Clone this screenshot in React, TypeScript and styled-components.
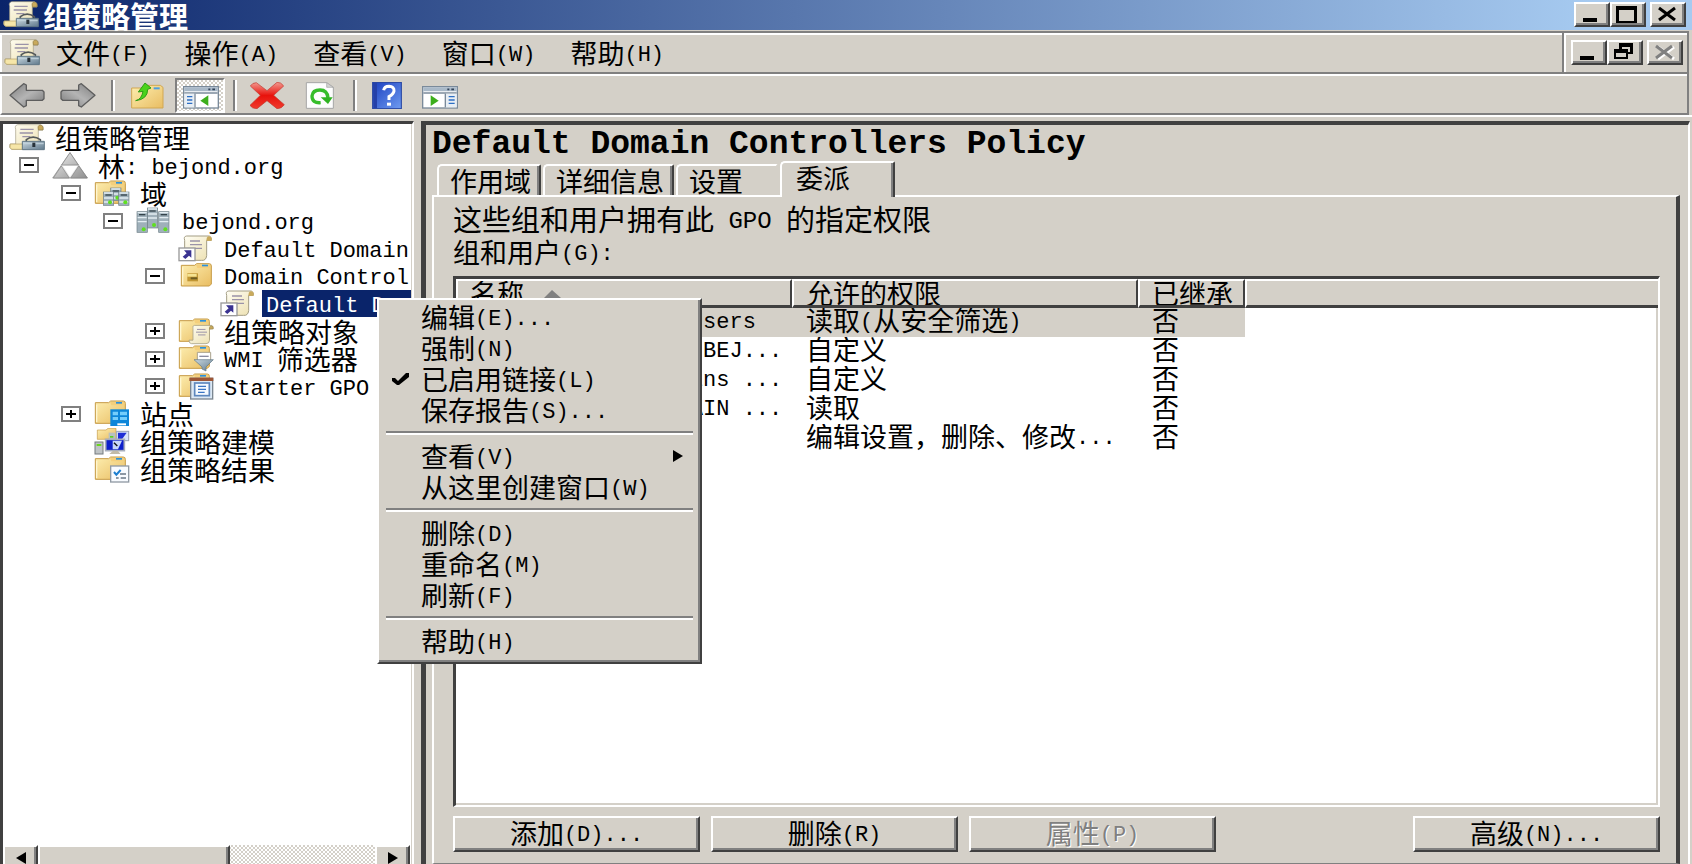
import React from "react";
import styled, { createGlobalStyle, css } from "styled-components";

const face = "#d4d0c8";
const shade = "#808080";
const dark = "#404040";
const navy = "#0a246a";

const GlobalStyle = createGlobalStyle`
  * { box-sizing: border-box; }
  body {
    margin: 0;
    background: ${face};
    color: #000;
    font-family: "Noto Sans CJK SC", sans-serif;
    font-size: 27px;
  }
  button {
    margin: 0;
    padding: 0;
    border: 0;
    background: none;
    color: inherit;
    font: inherit;
  }
`;

/* ---------- text ---------- */

const Latin = styled.span<{ $large?: boolean }>`
  font-family: "Liberation Mono", monospace;
  font-size: ${(p) => (p.$large ? 24 : 22)}px;
  line-height: 1px;
  vertical-align: 3px;
`;

/* Half-width characters are set in the monospace face, the rest in the CJK face. */
function Mixed({ text, large }: { text: string; large?: boolean }) {
  return (
    <>
      {text.split(/([\x20-\x7e]+)/).filter(Boolean).map((run, i) =>
        /^[\x20-\x7e]/.test(run) ? <Latin key={i} $large={large}>{run}</Latin> : run
      )}
    </>
  );
}

/* ---------- bevels ---------- */

const raised = css`
  background: ${face};
  border: 2px solid;
  border-color: #fff ${dark} ${dark} #fff;
  box-shadow: inset -2px -2px 0 ${shade};
`;

/* ---------- window frame ---------- */

const Window = styled.div`
  position: relative;
  display: flex;
  flex-direction: column;
  height: 100vh;
  overflow: hidden;
  white-space: pre;
`;

const TitleBar = styled.header`
  display: flex;
  align-items: center;
  flex: none;
  height: 30px;
  padding: 0 6px 1px 3px;
  gap: 4px;
  background: linear-gradient(90deg, ${navy}, #a6caf0 94%);
  color: #fff;
`;

const WindowTitle = styled.h1`
  flex: 1;
  margin: 0;
  font-size: 29px;
  line-height: 28px;
  font-weight: 700;
`;

const Controls = styled.div`
  display: flex;
`;

const ControlButton = styled.button<{ $apart?: boolean }>`
  ${raised}
  display: flex;
  width: 36px;
  height: 25px;
  margin-left: ${(p) => (p.$apart ? 4 : 0)}px;
`;

const Bars = styled.div`
  flex: none;
  margin: 1px 3px 0 0;
  border-right: 2px solid ${shade};
`;

const MenuBar = styled.nav`
  display: flex;
  height: 43px;
  border-top: 2px solid ${shade};
  border-bottom: 2px solid ${shade};
  box-shadow: inset 2px 2px 0 #fff;
  padding: 0 0 0 4px;
  align-items: center;
`;

const MenuList = styled.div`
  display: flex;
  flex: 1;
  gap: 35px;
  padding-left: 16px;
`;

const MenuButton = styled.button`
  line-height: 36px;
  white-space: pre;
`;

const ChildControls = styled(Controls)`
  align-self: stretch;
  align-items: center;
  border-left: 2px solid ${shade};
  box-shadow: inset 2px 0 0 #fff;
  padding: 0 4px 0 7px;
`;

const ToolBar = styled.div`
  display: flex;
  align-items: center;
  height: 41px;
  border-top: 2px solid #fff;
  border-bottom: 2px solid ${shade};
  border-left: 2px solid #fff;
  padding: 2px 0 0 7px;
`;

const ToolButton = styled.button<{ $pressed?: boolean; $gap: number }>`
  display: flex;
  margin-left: ${(p) => p.$gap}px;
  ${(p) =>
    p.$pressed &&
    css`
      align-self: stretch;
      align-items: flex-end;
      padding: 0 4px 2px 6px;
      border: 2px solid;
      border-color: ${shade} #fff #fff ${shade};
      background: repeating-conic-gradient(#fff 0 25%, ${face} 0 50%) 0 0 / 4px 4px;
    `}
`;

const ToolDivider = styled.span`
  width: 4px;
  height: 31px;
  margin-left: 15px;
  border-left: 2px solid ${shade};
  border-right: 2px solid #fff;
  &:nth-of-type(2) { margin-left: 8px; }
`;

/* ---------- body ---------- */

const Body = styled.main`
  display: flex;
  flex: 1;
  min-height: 0;
  gap: 7px;
  padding: 4px 2px 0 0;
  border-top: 2px solid #fff;
`;

const TreePane = styled.aside`
  display: flex;
  flex-direction: column;
  flex: 0 0 414px;
  min-width: 0;
  border-top: 3px solid ${dark};
  border-left: 3px solid ${dark};
  border-right: 2px solid #fff;
  background: #fff;
  box-shadow: inset -1px 0 0 ${face};
`;

const TreeScroll = styled.div`
  flex: 1;
  min-height: 0;
  margin-right: 1px;
  overflow: hidden;
`;

const Tree = styled.ul`
  display: grid;
  grid-template-rows: repeat(13, 1fr);
  grid-template-columns: 100%;
  height: 359px;
  margin: 0;
  padding: 0;
  list-style: none;
`;

const TreeRow = styled.li<{ $level: number }>`
  display: flex;
  align-items: center;
  min-height: 0;
  padding-left: ${(p) => (p.$level ? 7 + 42 * (p.$level - 1) : 6)}px;
`;

const ExpanderSlot = styled.span`
  flex: none;
  display: flex;
  width: 42px;
  padding-left: 9px;
`;

const Expander = styled.button`
  display: flex;
  width: 20px;
  height: 16px;
  border: 2px solid ${shade};
  background: #fff;
`;

const TreeLabel = styled.span<{ $selected?: boolean }>`
  flex: none;
  margin-left: 6px;
  padding: 0 4px;
  line-height: 27px;
  ${(p) => p.$selected && css`flex: 1; background: ${navy}; color: #fff;`}
`;

const ScrollBar = styled.div`
  display: flex;
  flex: none;
  height: 19px;
  margin-right: 2px;
  overflow: hidden;
  background: repeating-conic-gradient(#fff 0 25%, ${face} 0 50%) 0 0 / 4px 4px;
`;

const ScrollButton = styled.button`
  display: flex;
  justify-content: center;
  align-items: flex-end;
  width: 35px;
  border: 2px solid;
  border-bottom: 0;
  border-color: #fff ${dark} ${dark} #fff;
  box-shadow: inset -2px 0 0 ${shade};
  background: ${face};
`;

const ScrollTrack = styled.div`
  flex: 1;
  display: flex;
`;

const ScrollThumb = styled.div`
  width: 57%;
  border: 2px solid;
  border-bottom: 0;
  border-color: #fff ${dark} ${dark} #fff;
  box-shadow: inset -2px 0 0 ${shade};
  background: ${face};
`;

const DetailPane = styled.section`
  display: flex;
  flex-direction: column;
  flex: 1;
  min-width: 0;
  border: solid;
  border-width: 4px 2px 0 5px;
  border-color: ${dark} #fff ${dark} ${dark};
  padding: 0 8px 0 6px;
  background: ${face};
`;

const PolicyTitle = styled.h2`
  margin: 0;
  font: 700 33px/40px "Liberation Mono", monospace;
`;

const TabList = styled.div`
  display: flex;
  align-items: flex-end;
  height: 30px;
  padding-left: 5px;
`;

const Tab = styled.button<{ $active?: boolean; $flat?: boolean }>`
  height: 31px;
  min-width: ${(p) => (p.$flat ? 102 : 0)}px;
  margin-right: 2px;
  padding: 0 8px 0 11px;
  border: solid;
  border-width: 2px 2px 0 2px;
  border-color: #fff ${dark} ${face} #fff;
  border-radius: 5px 2px 0 0;
  box-shadow: inset -2px 0 0 ${shade};
  text-align: left;
  line-height: 30px;
  ${(p) => p.$flat && css`border-right-color: ${face}; box-shadow: none;`}
  ${(p) =>
    p.$active &&
    css`
      position: relative;
      height: 36px;
      min-width: 115px;
      margin-bottom: -2px;
      padding-bottom: 5px;
      padding-left: 14px;
      background: ${face};
    `}
`;

const TabPanel = styled.div`
  display: flex;
  flex-direction: column;
  flex: 1;
  min-height: 0;
  padding: 3px 16px 11px 19px;
  border: solid;
  border-width: 2px 4px 1px 2px;
  border-color: #fff ${dark} ${shade} #fff;
`;

const Description = styled.p`
  margin: 0;
  font-size: 29px;
  line-height: 36px;
`;

const ListCaption = styled.div`
  margin-bottom: 8px;
  line-height: 32px;
`;

const ListBox = styled.div`
  flex: 1;
  min-height: 0;
  overflow: hidden;
  background: #fff;
  border: solid;
  border-width: 3px 2px 2px 3px;
  border-color: ${dark} #fff #fff ${dark};
  box-shadow: inset -2px -2px 0 ${face};
`;

const PermissionTable = styled.table`
  width: 100%;
  table-layout: fixed;
  border-collapse: separate;
  border-spacing: 0;
`;

const NameCol = styled.col`width: 336px;`;
const RightsCol = styled.col`width: 346px;`;
const InheritedCol = styled.col`width: 107px;`;

const HeadCell = styled.th<{ $last?: boolean }>`
  height: 29px;
  padding: 0 0 0 12px;
  overflow: hidden;
  border: solid;
  border-width: 2px 2px 3px 2px;
  border-color: #fff ${dark} ${dark} #fff;
  ${(p) => p.$last && css`border-right: 0;`}
  background: ${face};
  font-weight: 400;
  text-align: left;
  line-height: 24px;
`;

const SortMark = styled.svg`
  margin: 0 0 6px 20px;
`;

const Cell = styled.td<{ $selected?: boolean; $lead?: boolean }>`
  height: 29px;
  padding: 0 0 0 ${(p) => (p.$lead ? 18 : 14)}px;
  overflow: hidden;
  vertical-align: top;
  line-height: 24px;
  ${(p) => p.$selected && css`background: ${face};`}
`;

const Principal = styled.span`
  display: flex;
  align-items: center;
  gap: 4px;
`;

const Actions = styled.div`
  display: flex;
  gap: 11px;
  padding-top: 9px;
`;

const PushButton = styled.button<{ $end?: boolean }>`
  ${raised}
  width: 247px;
  height: 36px;
  padding-bottom: 2px;
  line-height: 28px;
  white-space: pre;
  ${(p) => p.$end && css`margin-left: auto;`}
  &:disabled { color: ${shade}; text-shadow: 1px 1px 0 #fff; }
`;

/* ---------- context menu ---------- */

const ContextMenu = styled.div`
  ${raised}
  position: absolute;
  left: 377px;
  top: 298px;
  width: 325px;
  padding: 1px 7px 6px;
`;

const ContextItem = styled.button`
  display: flex;
  align-items: center;
  width: 100%;
  height: 31px;
  padding-right: 10px;
  line-height: 31px;
  text-align: left;
  white-space: pre;
`;

const CheckSlot = styled.span`
  display: flex;
  width: 35px;
  padding-left: 6px;
`;

const ItemText = styled.span`
  flex: 1;
`;

const ContextDivider = styled.hr`
  height: 4px;
  margin: 6px 0 5px;
  border: 0;
  border-top: 2px solid ${shade};
  border-bottom: 2px solid #fff;
`;

/* ---------- icons ---------- */

const Art = styled.svg`
  display: block;
  flex: none;
`;

const Defs = styled.svg`
  position: absolute;
`;

const Gradients = () => (
  <Defs width="0" height="0" aria-hidden="true">
    <defs>
      <linearGradient id="folder" x1="0" y1="0" x2="1" y2="1">
        <stop offset="0" stopColor="#fdeeb0" />
        <stop offset="1" stopColor="#e9bd62" />
      </linearGradient>
      <linearGradient id="paper" x1="0" y1="0" x2="1" y2="1">
        <stop offset="0" stopColor="#fffef4" />
        <stop offset="1" stopColor="#ecdfae" />
      </linearGradient>
      <linearGradient id="steel" x1="0" y1="0" x2="1" y2="1">
        <stop offset="0" stopColor="#c9d8e0" />
        <stop offset="1" stopColor="#60798c" />
      </linearGradient>
      <linearGradient id="gray" x1="0" y1="0" x2="1" y2="1">
        <stop offset="0" stopColor="#7c7c7c" />
        <stop offset=".5" stopColor="#b4b4b4" />
        <stop offset="1" stopColor="#777" />
      </linearGradient>
      <linearGradient id="silver" x1="0" y1="0" x2="1" y2="1">
        <stop offset="0" stopColor="#eee" />
        <stop offset="1" stopColor="#8f8f8f" />
      </linearGradient>
      <linearGradient id="blue" x1="0" y1="0" x2="1" y2="1">
        <stop offset="0" stopColor="#1a3fc0" />
        <stop offset="1" stopColor="#6f9bf0" />
      </linearGradient>
      <linearGradient id="red" x1="0" y1="0" x2="0" y2="1">
        <stop offset="0" stopColor="#f39a90" />
        <stop offset=".5" stopColor="#e8120c" />
        <stop offset="1" stopColor="#f03a2c" />
      </linearGradient>
    </defs>
  </Defs>
);

/* Icons are drawn on a 108 x 81 grid shown at 36 x 27. */
const Icon36 = ({ children }: { children: React.ReactNode }) => (
  <Art width="36" height="27" viewBox="0 0 108 81" aria-hidden="true">{children}</Art>
);

const Scroll = () => (
  <g>
    <path d="M26 3H94Q102 5 100 16H86V62Q86 76 72 76H14Q4 76 4 62H20V16Q16 4 26 3Z" fill="url(#paper)" stroke="#a39d84" strokeWidth="3" />
    <path d="M86 18Q84 6 92 4Q103 4 101 17Z" fill="#c9aa5c" stroke="#8f7d4a" strokeWidth="2" />
    <path d="M36 19H70M32 30H76M40 41H70" stroke="#9b93a8" strokeWidth="4" />
  </g>
);

const ConsoleIcon = () => (
  <Icon36>
    <path d="M26 2H94Q104 4 102 18H88V56H50V76H8Q-1 72 3 60H20V16Q16 4 26 2Z" fill="url(#paper)" stroke="#a39d84" strokeWidth="2" />
    <path d="M4 60H44V76H8Q0 72 4 60Z" fill="#f6e6a8" stroke="#b39f60" strokeWidth="2" />
    <path d="M88 18Q84 6 92 3Q105 3 102 18Z" fill="#c9aa5c" stroke="#8f7d4a" strokeWidth="2" />
    <path d="M34 16H74M32 27H72M40 38H64" stroke="#9b93a8" strokeWidth="4" />
    <path d="M52 54V47Q72 32 94 47V54" fill="none" stroke="#55595a" strokeWidth="5" />
    <path d="M40 52H106V77H40Z" fill="url(#steel)" stroke="#5f7685" strokeWidth="3" />
    <path d="M42 59H104" stroke="#c2d3dd" strokeWidth="3" />
    <path d="M70 56H79V69H70Z" fill="#28323a" />
  </Icon36>
);

const Folder = () => (
  <g>
    <path d="M4 8H44L50 3H88Q94 3 94 10V64L88 70H4Z" fill="url(#folder)" stroke="#c69a45" strokeWidth="3" />
    <path d="M48 6H90V16H52Z" fill="#f4cf7c" />
    <path d="M66 6H84V11H66Z" fill="#2b91dd" />
    <path d="M8 14V66" stroke="#fff6cf" strokeWidth="4" />
  </g>
);

const Server = ({ x, y, h }: { x: number; y: number; h: number }) => (
  <g>
    <rect x={x} y={y} width="31" height={h} fill="#9fb0ba" stroke="#6f8088" strokeWidth="2" />
    <path d={`M${x + 2} ${y + 3}h27M${x + 2} ${y + 18}h27M${x + 2} ${y + 30}h27`} stroke="#e3edf2" strokeWidth="4" />
    <path d={`M${x + 6} ${y + 9}h19`} stroke="#33424a" strokeWidth="4" />
    <circle cx={x + 20} cy={y + h - 9} r="6" fill="#5fe020" />
  </g>
);

const ForestIcon = () => (
  <Icon36>
    <path d="M54 2L106 78H2Z" fill="#e9e9e9" stroke="#8a8a8a" strokeWidth="2" />
    <path d="M54 2L79 39H29ZM28 42L52 78H4ZM80 42L106 78H56Z" fill="url(#silver)" stroke="#7f7f7f" strokeWidth="2" />
    <path d="M33 42H76L54 74Z" fill="#fff" />
  </Icon36>
);

const DomainsIcon = () => (
  <Icon36>
    <Folder />
    <Server x={50} y={24} h={38} /><Server x={28} y={36} h={40} /><Server x={74} y={36} h={40} />
  </Icon36>
);

const DomainIcon = () => (
  <Icon36><Server x={34} y={3} h={60} /><Server x={3} y={14} h={62} /><Server x={68} y={14} h={62} /></Icon36>
);

const LinkIcon = () => (
  <Icon36>
    <path d="M26 3H94Q102 6 100 16H86V62Q84 78 70 76H48V40H20V16Q16 4 26 3Z" fill="url(#paper)" stroke="#a39d84" strokeWidth="3" />
    <path d="M86 18Q84 6 92 4Q103 4 101 17Z" fill="#c9aa5c" />
    <path d="M36 18H66M36 29H72M50 40H72" stroke="#9b93a8" strokeWidth="4" />
    <rect x="3" y="39" width="48" height="38" fill="#fff" stroke="#9a9a9a" strokeWidth="4" />
    <path d="M18 46H40V68L33 62L22 72L14 65L26 55Z" fill="#3a3391" />
  </Icon36>
);

const UnitIcon = () => (
  <Icon36>
    <g transform="translate(6 2)">
      <Folder />
      <path d="M22 32H54V56H22Z" fill="#c19633" />
      <path d="M22 34H50V42H22Z" fill="#f5e391" />
      <path d="M32 44H52V50H32Z" fill="#6b5b22" />
    </g>
  </Icon36>
);

const PoliciesIcon = () => (
  <Icon36><Folder /><g transform="translate(30 20) scale(.75)"><Scroll /></g></Icon36>
);

const FilterIcon = () => (
  <Icon36>
    <Folder />
    <path d="M58 22H98V48H58Z" fill="#fff" stroke="#a9a28c" strokeWidth="3" /><path d="M64 34H92" stroke="#8b8ba0" strokeWidth="4" />
    <path d="M48 44H106L84 66V78L72 72V66Z" fill="url(#steel)" stroke="#5f7685" strokeWidth="2" />
  </Icon36>
);

const StarterIcon = () => (
  <Icon36>
    <Folder />
    <rect x="38" y="16" width="66" height="62" fill="#dce8f4" stroke="#7b8691" strokeWidth="4" />
    <path d="M34 14H106V24H34Z" fill="#9c5636" />
    <rect x="50" y="30" width="44" height="38" fill="#f5faff" stroke="#5d87bd" strokeWidth="5" />
    <path d="M60 40H84M60 49H84M60 58H80" stroke="#3a75c4" strokeWidth="4" />
  </Icon36>
);

const SitesIcon = () => (
  <Icon36>
    <Folder />
    <rect x="49" y="28" width="56" height="50" fill="#0d86d9" />
    <path d="M56 35H72V46H56ZM78 35H99V46H78ZM56 51H72V60H56ZM78 51H99V60H78Z" fill="#74cdfb" />
    <path d="M70 70H96V76H70Z" fill="#fff" />
  </Icon36>
);

const ModelingIcon = () => (
  <Icon36>
    <path d="M10 6H36L42 1H66V34H10Z" fill="url(#folder)" stroke="#c69a45" strokeWidth="2" />
    <path d="M44 14H64V34H44Z" fill="#b8c0c0" /><path d="M48 24H58V29H48Z" fill="#5ed022" />
    <rect x="68" y="10" width="36" height="28" fill="#d9e5fa" stroke="#98a2b5" strokeWidth="3" /><path d="M72 14H98L84 34H72Z" fill="#1f2fd6" />
    <rect x="3" y="42" width="24" height="36" fill="#bfc4c6" stroke="#747b7e" strokeWidth="3" /><path d="M8 48H22V54H8Z" fill="#6ad51d" />
    <rect x="35" y="34" width="56" height="34" fill="#0c1fcb" stroke="#a8aebb" strokeWidth="5" />
    <path d="M56 38H84L72 64H56Z" fill="#c7d6fb" /><path d="M60 44L70 54" stroke="#111" strokeWidth="4" />
    <path d="M56 69H72L80 78H46Z" fill="#c2bba8" />
  </Icon36>
);

const ResultsIcon = () => (
  <Icon36>
    <Folder />
    <rect x="50" y="30" width="54" height="48" fill="#f8fbff" stroke="#909aa4" strokeWidth="4" />
    <path d="M60 48L67 56L80 42" fill="none" stroke="#1c7ed0" strokeWidth="6" />
    <path d="M78 54H96M66 66H74M80 66H96" stroke="#6a7886" strokeWidth="4" />
  </Icon36>
);

const ArrowIcon = ({ flip }: { flip?: boolean }) => (
  <Icon36>
    <path
      transform={flip ? "translate(108 0) scale(-1 1)" : undefined}
      d="M3 40L44 5L52 9V25H100L105 30V50L100 55H52V71L44 75Z"
      fill="url(#gray)" stroke="#5e5e5e" strokeWidth="4" strokeLinejoin="round"
    />
  </Icon36>
);

const UpFolderIcon = () => (
  <Icon36>
    <path d="M8 18H46L54 10H94L102 16V78H8Z" fill="url(#folder)" stroke="#d1a752" strokeWidth="3" />
    <path d="M74 16H92V22H74Z" fill="#4d9fe0" />
    <path d="M20 56Q38 52 42 28L28 30L48 3L66 18L56 22Q56 52 20 56Z" fill="#4bd31b" stroke="#2c9c16" strokeWidth="3" />
  </Icon36>
);

const PaneIcon = ({ right }: { right?: boolean }) => (
  <Icon36>
    <rect x="2" y="14" width="104" height="64" fill="#fff" stroke="#7a8a9a" strokeWidth="4" />
    <path d="M4 16H104V28H4Z" fill="#a9b9c8" /><path d="M4 33H104" stroke="#7a8a9a" strokeWidth="4" />
    <path d="M76 22H82M88 22H96" stroke="#33445a" strokeWidth="5" />
    {right ? (
      <g>
        <path d="M72 35H104V76H72Z" fill="#e8eef4" /><path d="M70 35V76" stroke="#7a8a9a" strokeWidth="4" />
        <path d="M80 44H98M80 54H98M80 64H98" stroke="#2d6fc4" strokeWidth="4" /><path d="M26 40L50 56L26 72Z" fill="#3cae1c" />
      </g>
    ) : (
      <g>
        <path d="M4 35H34V76H4Z" fill="#e8eef4" /><path d="M36 35V76" stroke="#7a8a9a" strokeWidth="4" />
        <path d="M12 44H28M12 54H28M12 64H28" stroke="#2d6fc4" strokeWidth="4" /><path d="M76 40L52 56L76 72Z" fill="#3cae1c" />
      </g>
    )}
  </Icon36>
);

const DeleteIcon = () => (
  <Icon36>
    <path d="M4 12Q10 2 22 2L54 26L84 1Q96 0 104 12L74 40L106 68Q98 80 84 80L54 56L24 80Q8 80 3 70L34 40Z" fill="url(#red)" stroke="#c0392f" strokeWidth="2" />
  </Icon36>
);

const RefreshIcon = () => (
  <Icon36>
    <path d="M13 2H74L94 16V79H13Z" fill="#fdfdfd" stroke="#a5a5a5" strokeWidth="3" /><path d="M74 2V16H94Z" fill="#d3d3d3" stroke="#a5a5a5" strokeWidth="2" />
    <path d="M56 62Q30 64 30 42Q32 24 54 24Q76 24 78 48" fill="none" stroke="#37bd2b" strokeWidth="10" />
    <path d="M56 46H92L78 66Z" fill="#2fb322" />
  </Icon36>
);

const HelpIcon = () => (
  <Icon36>
    <rect x="11" y="1" width="86" height="79" fill="url(#blue)" stroke="#203f9e" strokeWidth="3" /><path d="M13 3H24V78H13Z" fill="#2540a8" />
    <path d="M44 25Q46 13 60 13Q76 14 75 27Q74 36 60 44V54" fill="none" stroke="#fff" strokeWidth="9" />
    <path d="M54 62H66V71H54Z" fill="#fff" />
  </Icon36>
);

const UsersIcon = () => (
  <Art width="27" height="24" viewBox="0 0 27 24" aria-hidden="true">
    <circle cx="9" cy="7" r="4" fill="#e5b98c" /><path d="M2 21Q2 12 9 12Q16 12 16 21Z" fill="#3f8a5d" />
    <circle cx="18" cy="8" r="4" fill="#e5b98c" /><path d="M11 23Q11 13 18 13Q25 13 25 23Z" fill="#3f63a8" />
  </Art>
);

type GlyphKind = "min" | "max" | "restore" | "close" | "closeOff";
const Glyph = ({ kind }: { kind: GlyphKind }) => (
  <Art width="32" height="21" viewBox="0 0 32 21" aria-hidden="true">
    {kind === "min" && <path d="M7 14H21V18H7Z" />}
    {kind === "max" && <path d="M4 2H25V19H4ZM7 6V17H22V6Z" fillRule="evenodd" />}
    {kind === "restore" && (
      <path d="M10 1H24V12H19V17H5V7H10ZM13 5V7H19V10H21V5ZM7 11V15H17V11Z" fillRule="evenodd" />
    )}
    {kind === "closeOff" && <path d="M9 5L25 17M25 5L9 17" stroke="#fff" strokeWidth="3" />}
    {(kind === "close" || kind === "closeOff") && (
      <path d="M7 4L23 16M23 4L7 16" stroke={kind === "close" ? "#000" : shade} strokeWidth="3" />
    )}
  </Art>
);

/* ---------- data ---------- */

type Node = { level: number; text: string; icon: React.FC; open?: boolean; selected?: boolean };

const nodes: Node[] = [
  { level: 0, text: "组策略管理", icon: ConsoleIcon },
  { level: 1, text: "林: bejond.org", icon: ForestIcon, open: true },
  { level: 2, text: "域", icon: DomainsIcon, open: true },
  { level: 3, text: "bejond.org", icon: DomainIcon, open: true },
  { level: 4, text: "Default Domain", icon: LinkIcon },
  { level: 4, text: "Domain Control", icon: UnitIcon, open: true },
  { level: 5, text: "Default D", icon: LinkIcon, selected: true },
  { level: 4, text: "组策略对象", icon: PoliciesIcon, open: false },
  { level: 4, text: "WMI 筛选器", icon: FilterIcon, open: false },
  { level: 4, text: "Starter GPO", icon: StarterIcon, open: false },
  { level: 2, text: "站点", icon: SitesIcon, open: false },
  { level: 2, text: "组策略建模", icon: ModelingIcon },
  { level: 2, text: "组策略结果", icon: ResultsIcon },
];

const permissions = [
  ["Authenticated Users", "读取(从安全筛选)", "否"],
  ["Domain Admins (BEJ...", "自定义", "否"],
  ["Enterprise Admins ...", "自定义", "否"],
  ["ENTERPRISE DOMAIN ...", "读取", "否"],
  ["SYSTEM", "编辑设置，删除、修改...", "否"],
];

const menuGroups = [
  ["编辑(E)...", "强制(N)", "已启用链接(L)", "保存报告(S)..."],
  ["查看(V)", "从这里创建窗口(W)"],
  ["删除(D)", "重命名(M)", "刷新(F)"],
  ["帮助(H)"],
];

export default function App() {
  return (
    <Window>
      <GlobalStyle />
      <Gradients />
      <TitleBar>
        <ConsoleIcon />
        <WindowTitle>组策略管理</WindowTitle>
        <Controls>
          <ControlButton aria-label="最小化"><Glyph kind="min" /></ControlButton>
          <ControlButton aria-label="最大化"><Glyph kind="max" /></ControlButton>
          <ControlButton $apart aria-label="关闭"><Glyph kind="close" /></ControlButton>
        </Controls>
      </TitleBar>

      <Bars>
        <MenuBar>
          <ConsoleIcon />
          <MenuList>
            {["文件(F)", "操作(A)", "查看(V)", "窗口(W)", "帮助(H)"].map((m) => (
              <MenuButton key={m}><Mixed text={m} /></MenuButton>
            ))}
          </MenuList>
          <ChildControls>
            <ControlButton aria-label="最小化"><Glyph kind="min" /></ControlButton>
            <ControlButton aria-label="还原"><Glyph kind="restore" /></ControlButton>
            <ControlButton $apart disabled aria-label="关闭"><Glyph kind="closeOff" /></ControlButton>
          </ChildControls>
        </MenuBar>
        <ToolBar>
          <ToolButton $gap={0} aria-label="后退"><ArrowIcon /></ToolButton>
          <ToolButton $gap={15} aria-label="前进"><ArrowIcon flip /></ToolButton>
          <ToolDivider />
          <ToolButton $gap={14} aria-label="上移"><UpFolderIcon /></ToolButton>
          <ToolButton $gap={10} $pressed aria-pressed="true" aria-label="显示控制台树"><PaneIcon /></ToolButton>
          <ToolDivider />
          <ToolButton $gap={12} aria-label="删除"><DeleteIcon /></ToolButton>
          <ToolButton $gap={17} aria-label="刷新"><RefreshIcon /></ToolButton>
          <ToolDivider />
          <ToolButton $gap={12} aria-label="帮助"><HelpIcon /></ToolButton>
          <ToolButton $gap={17} aria-label="显示操作窗格"><PaneIcon right /></ToolButton>
        </ToolBar>
      </Bars>

      <Body>
        <TreePane>
          <TreeScroll>
            <Tree role="tree">
              {nodes.map((n, i) => (
                <TreeRow key={i} $level={n.level} role="treeitem" aria-selected={!!n.selected}>
                  {n.level > 0 && (
                    <ExpanderSlot>
                      {n.open !== undefined && (
                        <Expander aria-label={n.open ? "折叠" : "展开"}>
                          <Art width="16" height="12" viewBox="0 0 16 12">
                            <path d={n.open ? "M3 5H13V7H3Z" : "M3 5H7V2H9V5H13V7H9V10H7V7H3Z"} />
                          </Art>
                        </Expander>
                      )}
                    </ExpanderSlot>
                  )}
                  <n.icon />
                  <TreeLabel $selected={n.selected}><Mixed text={n.text} /></TreeLabel>
                </TreeRow>
              ))}
            </Tree>
          </TreeScroll>
          <ScrollBar>
            <ScrollButton aria-label="向左滚动">
              <Art width="10" height="12" viewBox="0 0 10 12"><path d="M10 0V12L0 6Z" /></Art>
            </ScrollButton>
            <ScrollTrack><ScrollThumb /></ScrollTrack>
            <ScrollButton aria-label="向右滚动">
              <Art width="10" height="12" viewBox="0 0 10 12"><path d="M0 0V12L10 6Z" /></Art>
            </ScrollButton>
          </ScrollBar>
        </TreePane>

        <DetailPane>
          <PolicyTitle>Default Domain Controllers Policy</PolicyTitle>
          <TabList role="tablist">
            <Tab role="tab">作用域</Tab>
            <Tab role="tab">详细信息</Tab>
            <Tab role="tab" $flat>设置</Tab>
            <Tab role="tab" aria-selected="true" $active>委派</Tab>
          </TabList>
          <TabPanel role="tabpanel">
            <Description><Mixed large text="这些组和用户拥有此 GPO 的指定权限" /></Description>
            <ListCaption id="list-caption"><Mixed text="组和用户(G):" /></ListCaption>
            <ListBox>
              <PermissionTable aria-labelledby="list-caption">
                <colgroup><NameCol /><RightsCol /><InheritedCol /><col /></colgroup>
                <thead>
                  <tr>
                    <HeadCell>
                      名称<SortMark width="17" height="8" viewBox="0 0 17 8"><path d="M8 0L17 8H0Z" fill={shade} /></SortMark>
                    </HeadCell>
                    <HeadCell>允许的权限</HeadCell>
                    <HeadCell>已继承</HeadCell>
                    <HeadCell $last aria-hidden="true" />
                  </tr>
                </thead>
                <tbody>
                  {permissions.map(([name, rights, inherited], i) => (
                    <tr key={name}>
                      <Cell $selected={i === 0} $lead>
                        <Principal><UsersIcon /><span><Mixed text={name} /></span></Principal>
                      </Cell>
                      <Cell $selected={i === 0}><Mixed text={rights} /></Cell>
                      <Cell $selected={i === 0}>{inherited}</Cell>
                      <td />
                    </tr>
                  ))}
                </tbody>
              </PermissionTable>
            </ListBox>
            <Actions>
              <PushButton><Mixed text="添加(D)..." /></PushButton>
              <PushButton><Mixed text="删除(R)" /></PushButton>
              <PushButton disabled><Mixed text="属性(P)" /></PushButton>
              <PushButton $end><Mixed text="高级(N)..." /></PushButton>
            </Actions>
          </TabPanel>
        </DetailPane>
      </Body>

      <ContextMenu role="menu">
        {menuGroups.map((group, g) => (
          <React.Fragment key={g}>
            {g > 0 && <ContextDivider />}
            {group.map((text) => (
              <ContextItem key={text} role="menuitem">
                <CheckSlot>
                  {text.startsWith("已启用") && (
                    <Art width="17" height="12" viewBox="0 0 17 12"><path d="M0 5H3L6 8L14 0H17V4L7 12H5L0 8Z" /></Art>
                  )}
                </CheckSlot>
                <ItemText><Mixed text={text} /></ItemText>
                {text.startsWith("查看") && (
                  <Art width="10" height="12" viewBox="0 0 10 12"><path d="M0 0V12L10 6Z" /></Art>
                )}
              </ContextItem>
            ))}
          </React.Fragment>
        ))}
      </ContextMenu>
    </Window>
  );
}
